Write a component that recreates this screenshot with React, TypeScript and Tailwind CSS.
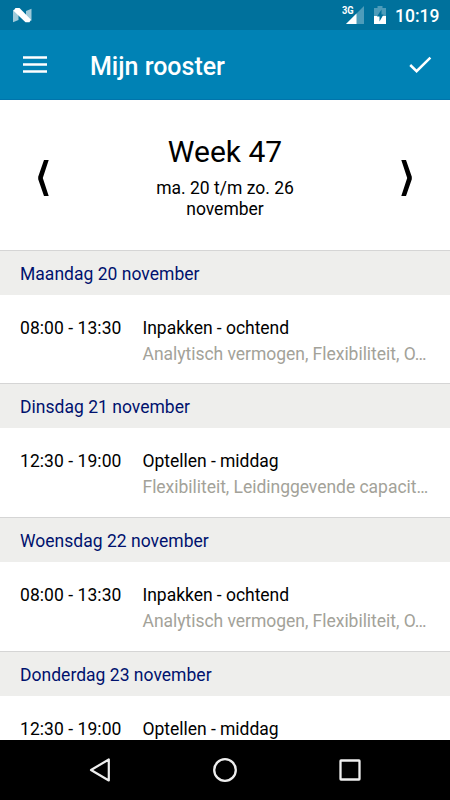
import React from "react";

type Shift = { day: string; time: string; title: string; skills?: string };

const shifts: Shift[] = [
  { day: "Maandag 20 november", time: "08:00 - 13:30", title: "Inpakken - ochtend", skills: "Analytisch vermogen, Flexibiliteit, O…" },
  { day: "Dinsdag 21 november", time: "12:30 - 19:00", title: "Optellen - middag", skills: "Flexibiliteit, Leidinggevende capacit…" },
  { day: "Woensdag 22 november", time: "08:00 - 13:30", title: "Inpakken - ochtend", skills: "Analytisch vermogen, Flexibiliteit, O…" },
  { day: "Donderdag 23 november", time: "12:30 - 19:00", title: "Optellen - middag" },
];

function StatusBar() {
  return (
    <div className="flex h-[30px] shrink-0 items-start bg-[#00719c] pr-[10px] pl-[13px] text-white">
      <svg className="mt-[8px]" width="19" height="15" viewBox="0 0 19 15">
        <path d="M0 1.8 5.5 4.5V12L0 14.2ZM18.5.8 13 3v7.5l5.5 2.2Z" fill="#fff" fillOpacity=".62" />
        <path d="M2.5 0h4L18 11.7l-1.5 2.5h-4L.5 2.8Z" fill="#fff" />
      </svg>
      <div className="ml-auto flex items-start">
        <span className="mt-[4px] -mr-[11px] w-[13px] origin-left scale-x-[0.85] text-[11px] leading-[13px] font-bold">3G</span>
        <svg className="mt-[6px] ml-[2px]" width="18" height="18" viewBox="0 0 18 18">
          <path d="M0 18 18 0v18Z" fill="#fff" fillOpacity=".3" />
          <path d="M0 18 10.5 7.5V18Z" fill="#fff" />
        </svg>
        <svg className="mt-[6px] ml-[10px]" width="12" height="18" viewBox="0 0 12 18">
          <path d="M3.5 0h5v2H12v8H0V2h3.5Z" fill="#fff" fillOpacity=".3" />
          <path d="M0 10h12v8H0Z" fill="#fff" />
          <path d="M7.5 3.5 3 10.5h2.5v5L9.5 8.5H7.5Z" fill="#00719c" />
        </svg>
        <span className="mt-[6px] ml-[9px] w-[45px] text-[17.5px] leading-[21px] font-medium whitespace-nowrap">10:19</span>
      </div>
    </div>
  );
}

function AppBar() {
  return (
    <header className="flex h-[70px] shrink-0 items-center border-b border-[#0074ab] bg-[#0082b5] pr-[18px] pl-[23px] text-white">
      <button aria-label="Menu">
        <svg width="24" height="17" viewBox="0 0 24 17">
          <path d="M0 1.5h24M0 8.5h24M0 15.5h24" stroke="#fff" strokeWidth="2.6" />
        </svg>
      </button>
      <h1 className="mt-[4px] ml-[43px] text-[25px] leading-[30px] font-medium">Mijn rooster</h1>
      <button aria-label="Bevestigen" className="ml-auto">
        <svg width="23" height="17" viewBox="0 0 23 17">
          <path d="M1.2 9 7.6 15.2 21.4 1.7" fill="none" stroke="#fff" strokeWidth="2.5" />
        </svg>
      </button>
    </header>
  );
}

function WeekPicker() {
  return (
    <section className="flex h-[149px] shrink-0 justify-between px-[38px] text-black">
      <button aria-label="Vorige week" className="mt-[60px] h-[36px]">
        <svg width="11" height="36" viewBox="0 0 11 36">
          <path d="M6 0h4.7L4.8 18l5.9 18H6L.2 19.2v-2.4Z" />
        </svg>
      </button>
      <div className="text-center">
        <h2 className="mt-[34px] text-[30px] leading-[36px]">Week 47</h2>
        <p className="mt-[8px] w-[150px] text-[17.5px] leading-[20.5px]">ma. 20 t/m zo. 26 november</p>
      </div>
      <button aria-label="Volgende week" className="mt-[60px] h-[36px]">
        <svg width="11" height="36" viewBox="0 0 11 36">
          <path d="M5 0H.3l5.9 18L.3 36H5l5.8-16.8v-2.4Z" />
        </svg>
      </button>
    </section>
  );
}

function ShiftRow({ day, time, title, skills }: Shift) {
  return (
    <article className="h-[133.75px] shrink-0">
      <h3 className="h-[45px] border-t border-[#d5d5d5] bg-[#eeeeec] pl-[20px] text-[17.5px] leading-[46px] tracking-[0.02px] text-[#00126e]">{day}</h3>
      <div className="flex pt-[23px] pl-[20px] text-[17.5px] whitespace-nowrap">
        <span className="w-[122.5px] leading-[21px] tracking-[0.06px]">{time}</span>
        <div>
          <div className="leading-[21px] tracking-[-0.03px]">{title}</div>
          {skills && <div className="mt-[5px] leading-[21px] tracking-[-0.03px] text-[#a3a299]">{skills}</div>}
        </div>
      </div>
    </article>
  );
}

function NavBar() {
  return (
    <nav className="flex h-[60px] shrink-0 items-center justify-between bg-black px-[88px]">
      <svg width="24" height="26" viewBox="0 0 24 26" fill="none" stroke="#eee" strokeWidth="2.2" strokeLinejoin="round">
        <path d="M20.8 2.5v21L3 13Z" />
      </svg>
      <svg width="26" height="26" viewBox="0 0 26 26" fill="none" stroke="#eee" strokeWidth="2.3">
        <circle cx="13" cy="13" r="10.8" />
      </svg>
      <svg width="24" height="24" viewBox="0 0 24 24" fill="none" stroke="#eee" strokeWidth="2.3" strokeLinejoin="round">
        <rect x="2.5" y="2.5" width="19" height="19" rx=".5" />
      </svg>
    </nav>
  );
}

export default function App() {
  return (
    <div className="flex h-[800px] w-[450px] flex-col overflow-hidden bg-white font-['Roboto',sans-serif] text-black">
      <StatusBar />
      <AppBar />
      <WeekPicker />
      <main className="flex min-h-0 flex-1 flex-col overflow-hidden pt-[0.6px]">
        {shifts.map((s) => (
          <ShiftRow key={s.day} {...s} />
        ))}
      </main>
      <NavBar />
    </div>
  );
}
